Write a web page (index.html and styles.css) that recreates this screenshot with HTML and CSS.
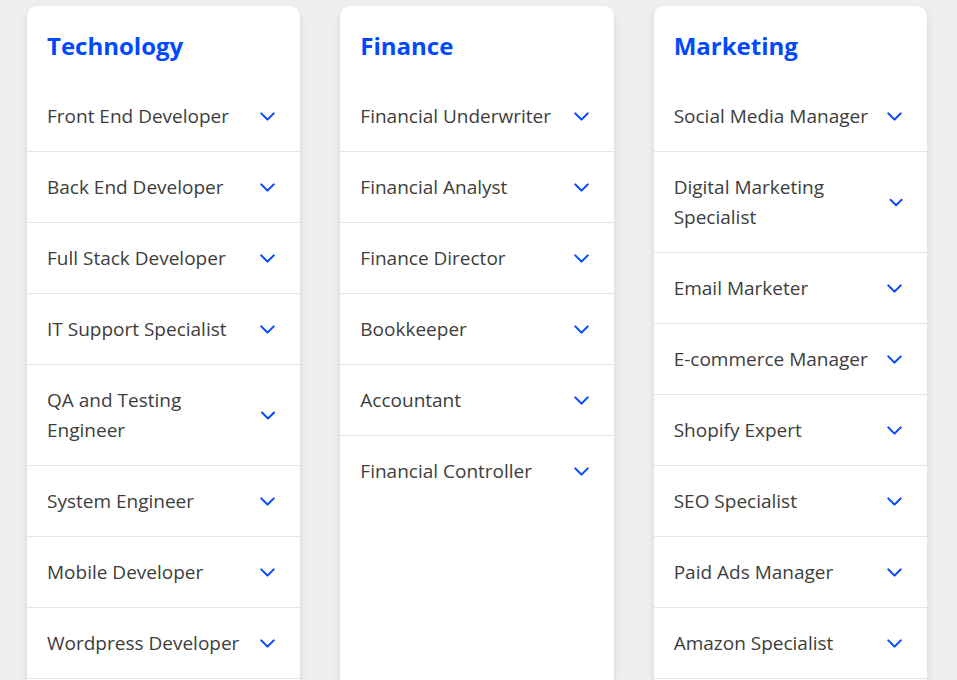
FILE: index.html
```
<!DOCTYPE html>
<html lang="en">
<head>
<meta charset="utf-8">
<meta name="viewport" content="width=device-width, initial-scale=1">
<title>Roles by department</title>
<link rel="stylesheet" href="styles.css">
</head>
<body>
<svg class="sprite" aria-hidden="true">
  <symbol id="chevron" viewBox="0 0 24 24"><path d="M6 9l6 6 6-6"/></symbol>
</svg>
<main class="columns">
  <section class="card">
    <h2 class="card-title">Technology</h2>
    <ul class="roles">
      <li><button class="role" type="button"><span>Front End Developer</span><svg class="chevron"><use href="#chevron"/></svg></button></li>
      <li><button class="role" type="button"><span>Back End Developer</span><svg class="chevron"><use href="#chevron"/></svg></button></li>
      <li><button class="role" type="button"><span>Full Stack Developer</span><svg class="chevron"><use href="#chevron"/></svg></button></li>
      <li><button class="role" type="button"><span>IT Support Specialist</span><svg class="chevron"><use href="#chevron"/></svg></button></li>
      <li><button class="role" type="button"><span>QA and Testing Engineer</span><svg class="chevron"><use href="#chevron"/></svg></button></li>
      <li><button class="role" type="button"><span>System Engineer</span><svg class="chevron"><use href="#chevron"/></svg></button></li>
      <li><button class="role" type="button"><span>Mobile Developer</span><svg class="chevron"><use href="#chevron"/></svg></button></li>
      <li><button class="role" type="button"><span>Wordpress Developer</span><svg class="chevron"><use href="#chevron"/></svg></button></li>
    </ul>
  </section>
  <section class="card">
    <h2 class="card-title">Finance</h2>
    <ul class="roles roles-complete">
      <li><button class="role" type="button"><span>Financial Underwriter</span><svg class="chevron"><use href="#chevron"/></svg></button></li>
      <li><button class="role" type="button"><span>Financial Analyst</span><svg class="chevron"><use href="#chevron"/></svg></button></li>
      <li><button class="role" type="button"><span>Finance Director</span><svg class="chevron"><use href="#chevron"/></svg></button></li>
      <li><button class="role" type="button"><span>Bookkeeper</span><svg class="chevron"><use href="#chevron"/></svg></button></li>
      <li><button class="role" type="button"><span>Accountant</span><svg class="chevron"><use href="#chevron"/></svg></button></li>
      <li><button class="role" type="button"><span>Financial Controller</span><svg class="chevron"><use href="#chevron"/></svg></button></li>
    </ul>
  </section>
  <section class="card">
    <h2 class="card-title">Marketing</h2>
    <ul class="roles">
      <li><button class="role" type="button"><span>Social Media Manager</span><svg class="chevron"><use href="#chevron"/></svg></button></li>
      <li><button class="role" type="button"><span>Digital Marketing Specialist</span><svg class="chevron"><use href="#chevron"/></svg></button></li>
      <li><button class="role" type="button"><span>Email Marketer</span><svg class="chevron"><use href="#chevron"/></svg></button></li>
      <li><button class="role" type="button"><span>E-commerce Manager</span><svg class="chevron"><use href="#chevron"/></svg></button></li>
      <li><button class="role" type="button"><span>Shopify Expert</span><svg class="chevron"><use href="#chevron"/></svg></button></li>
      <li><button class="role" type="button"><span>SEO Specialist</span><svg class="chevron"><use href="#chevron"/></svg></button></li>
      <li><button class="role" type="button"><span>Paid Ads Manager</span><svg class="chevron"><use href="#chevron"/></svg></button></li>
      <li><button class="role" type="button"><span>Amazon Specialist</span><svg class="chevron"><use href="#chevron"/></svg></button></li>
    </ul>
  </section>
</main>
</body>
</html>
```
FILE: styles.css
```
* {
  box-sizing: border-box;
}

body {
  margin: 0;
  background: #efefef;
  color: #3d3d3d;
  font-family: "Segoe UI", "Open Sans", sans-serif;
  font-size: 19px;
  line-height: 30px;
}

.sprite {
  display: none;
}

.columns {
  display: grid;
  grid-template-columns: repeat(3, minmax(0, 1fr));
  gap: 40px;
  min-height: 100vh;
  padding: 6px 30px 0 27px;
}

.card {
  background: #fff;
  border-radius: 10px 10px 0 0;
  box-shadow: 0 4px 8px rgba(0, 0, 0, 0.1);
}

.card-title {
  margin: 0;
  padding: 20px 20px 16px;
  color: #0049ff;
  font-size: 24px;
  font-weight: 700;
  line-height: 39px;
}

.roles {
  margin: 0;
  padding: 0;
  list-style: none;
}

.roles li {
  border-bottom: 1px solid #e5e5e5;
}

.roles-complete li:last-child {
  border-bottom: 0;
}

.role {
  display: flex;
  align-items: center;
  justify-content: space-between;
  width: 100%;
  padding: 20px;
  border: 0;
  background: none;
  color: inherit;
  font: inherit;
  text-align: left;
  cursor: pointer;
}

.chevron {
  width: 25px;
  height: 25px;
  fill: none;
  stroke: #0049ff;
  stroke-width: 2;
  stroke-linecap: round;
  stroke-linejoin: round;
}
```
